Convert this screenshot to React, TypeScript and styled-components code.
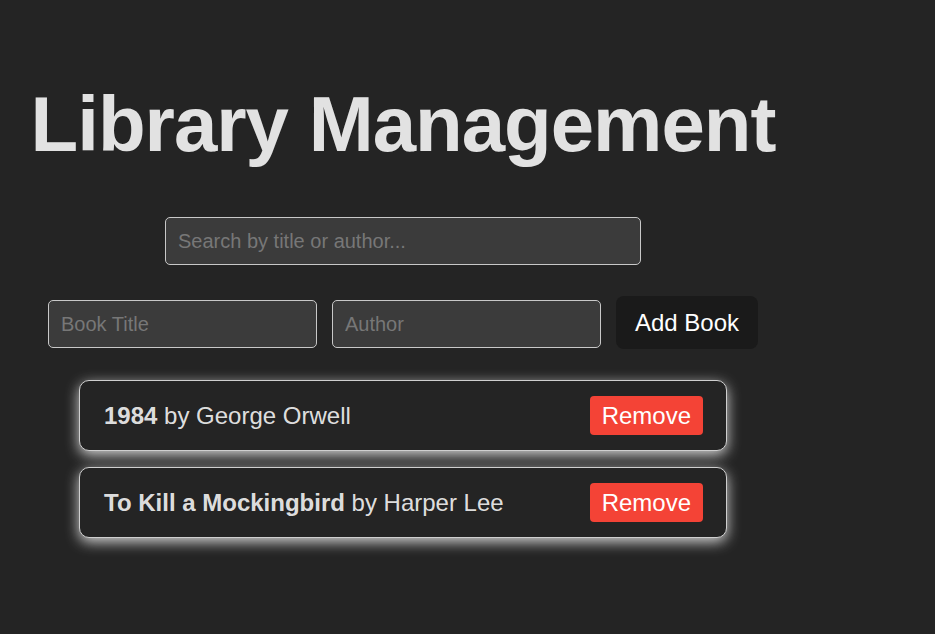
import React, { useState } from "react";
import styled, { createGlobalStyle } from "styled-components";

const GlobalStyle = createGlobalStyle`
  html, body {
    margin: 0;
    padding: 0;
    background: #242424;
  }
  body {
    font-family: "Liberation Sans", Arial, sans-serif;
    color: rgba(255, 255, 255, 0.87);
  }
  * { box-sizing: border-box; }
`;

const Page = styled.div`
  width: 790px;
  margin-left: 8px;
  display: flex;
  flex-direction: column;
  align-items: center;
  padding: 79px 0 60px;
`;

const Title = styled.h1`
  margin: 0 0 47px;
  font-size: 78px;
  font-weight: 700;
  letter-spacing: -1px;
  line-height: normal;
  color: rgba(255, 255, 255, 0.87);
`;

const Input = styled.input<{ $width: number }>`
  width: ${(p) => p.$width}px;
  height: 48px;
  padding: 0 12px;
  font-family: "Liberation Sans", Arial, sans-serif;
  font-size: 20px;
  color: rgba(255, 255, 255, 0.87);
  background: #3b3b3b;
  border: 1px solid #c8c8c8;
  border-radius: 5px;
  outline: none;
  &::placeholder {
    color: #777;
  }
`;

const SearchWrap = styled.div`
  margin-bottom: 31px;
`;

const FormRow = styled.form`
  display: flex;
  align-items: flex-end;
  gap: 15px;
  margin-bottom: 31px;

  & > input {
    margin-bottom: 1px;
  }
`;

const AddButton = styled.button`
  height: 53px;
  padding: 0 18px;
  font-family: "Liberation Sans", Arial, sans-serif;
  font-size: 24px;
  color: #fff;
  background: #1a1a1a;
  border: 1px solid transparent;
  border-radius: 8px;
  cursor: pointer;
`;

const List = styled.ul`
  list-style: none;
  margin: 0;
  padding: 0;
  display: flex;
  flex-direction: column;
  gap: 16px;
`;

const Card = styled.li`
  width: 648px;
  display: flex;
  align-items: center;
  justify-content: space-between;
  padding: 15px 23px 15px 24px;
  background: #242424;
  border: 1px solid #cfcfcf;
  border-radius: 10px;
  box-shadow: 0 4px 14px rgba(255, 255, 255, 0.8);
  font-size: 24px;
  color: rgba(255, 255, 255, 0.87);
`;

const BookText = styled.span`
  strong {
    font-weight: 700;
  }
`;

const RemoveButton = styled.button`
  height: 39px;
  padding: 0 12px;
  font-family: "Liberation Sans", Arial, sans-serif;
  font-size: 24px;
  color: #fff;
  background: #f44336;
  border: none;
  border-radius: 4px;
  cursor: pointer;
`;

type Book = { id: number; title: string; author: string };

export default function App() {
  const [books, setBooks] = useState<Book[]>([
    { id: 1, title: "1984", author: "George Orwell" },
    { id: 2, title: "To Kill a Mockingbird", author: "Harper Lee" },
  ]);
  const [query, setQuery] = useState("");
  const [title, setTitle] = useState("");
  const [author, setAuthor] = useState("");

  const filtered = books.filter(
    (b) =>
      b.title.toLowerCase().includes(query.toLowerCase()) ||
      b.author.toLowerCase().includes(query.toLowerCase())
  );

  const add = (e: React.FormEvent) => {
    e.preventDefault();
    if (!title.trim() || !author.trim()) return;
    setBooks([...books, { id: Date.now(), title, author }]);
    setTitle("");
    setAuthor("");
  };

  return (
    <>
      <GlobalStyle />
      <Page>
        <Title>Library Management</Title>
        <SearchWrap>
          <Input
            $width={476}
            placeholder="Search by title or author..."
            value={query}
            onChange={(e) => setQuery(e.target.value)}
          />
        </SearchWrap>
        <FormRow onSubmit={add}>
          <Input
            $width={269}
            placeholder="Book Title"
            value={title}
            onChange={(e) => setTitle(e.target.value)}
          />
          <Input
            $width={269}
            placeholder="Author"
            value={author}
            onChange={(e) => setAuthor(e.target.value)}
          />
          <AddButton type="submit">Add Book</AddButton>
        </FormRow>
        <List>
          {filtered.map((b) => (
            <Card key={b.id}>
              <BookText>
                <strong>{b.title}</strong> by {b.author}
              </BookText>
              <RemoveButton onClick={() => setBooks(books.filter((x) => x.id !== b.id))}>
                Remove
              </RemoveButton>
            </Card>
          ))}
        </List>
      </Page>
    </>
  );
}
